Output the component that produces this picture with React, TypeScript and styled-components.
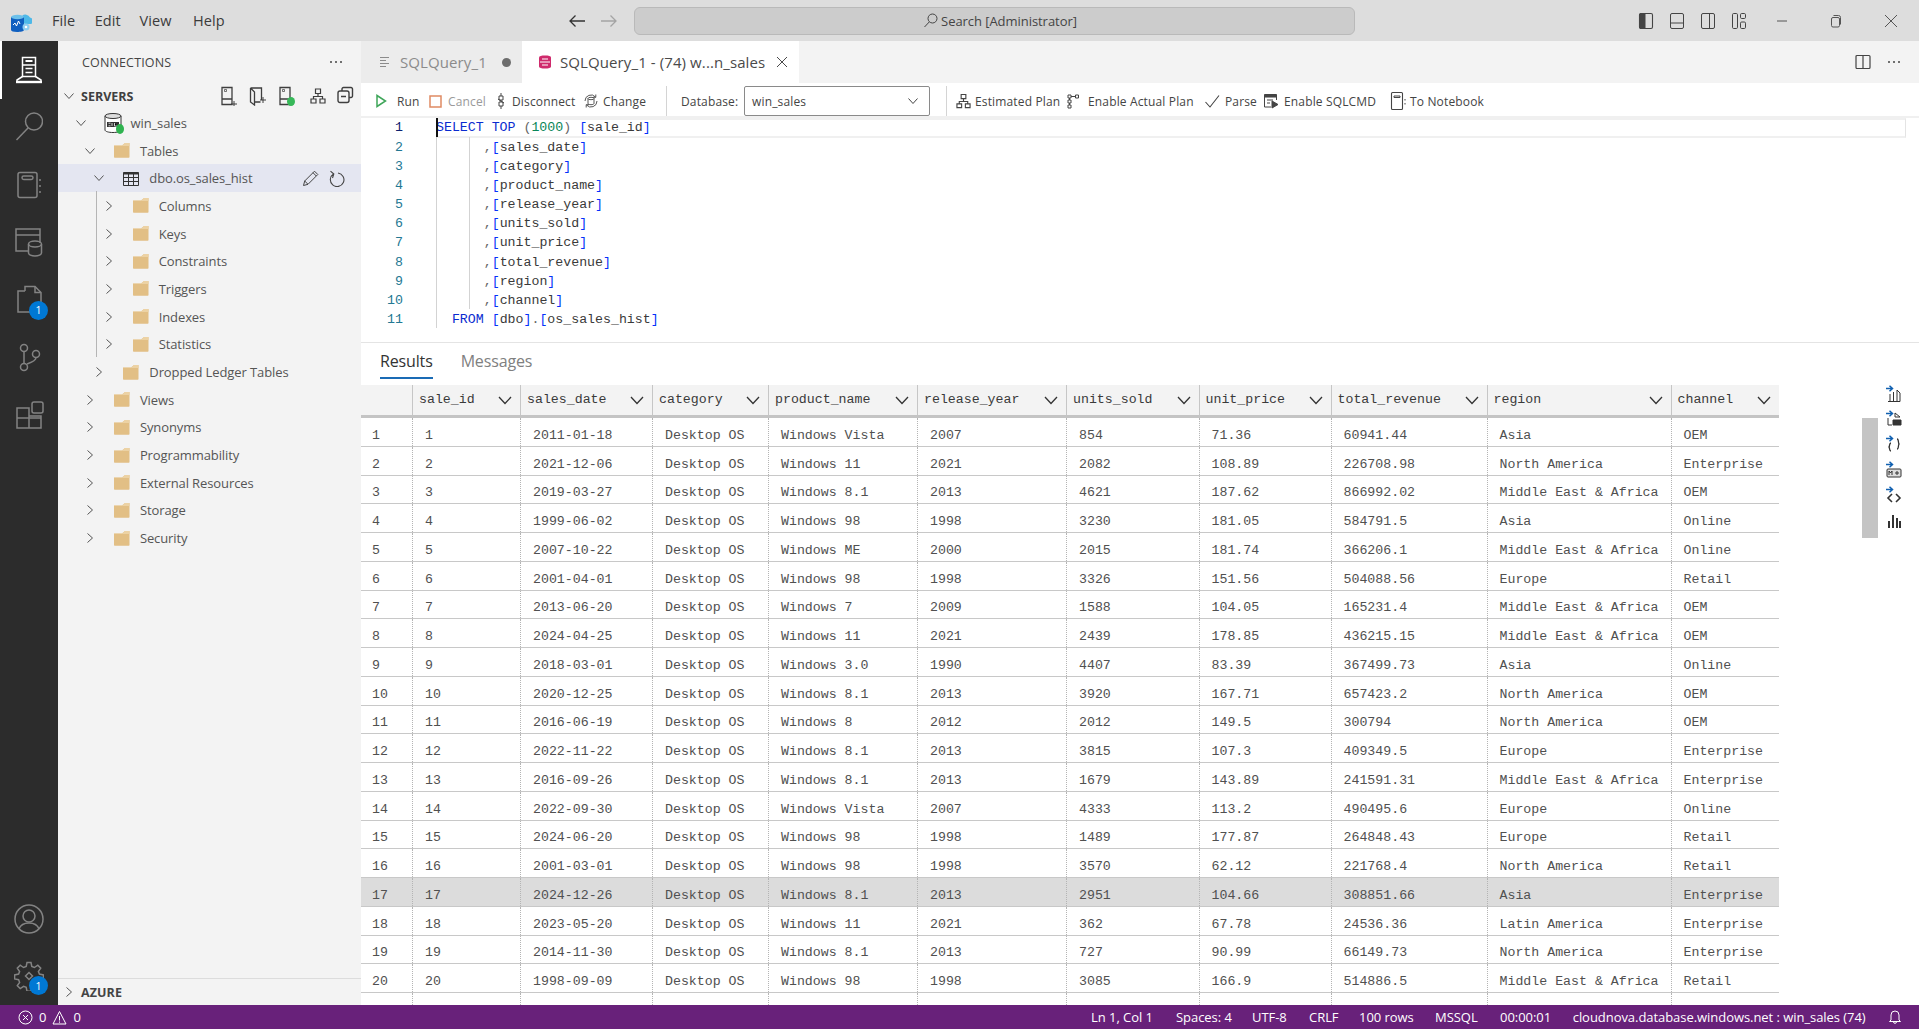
import React from "react";
import styled, { createGlobalStyle } from "styled-components";

const UI = `"Open Sans", "Noto Sans", sans-serif`;
const MONO = `"Liberation Mono", "DejaVu Sans Mono", monospace`;

const Global = createGlobalStyle`
  html, body { margin: 0; padding: 0; width: 100%; height: 100%; overflow: hidden; background: #fff; }
  #root { width: 100%; height: 100%; }
  * { box-sizing: border-box; }
`;

const Shell = styled.div`
  width: 1919px; height: 1029px; display: flex; flex-direction: column; overflow: hidden;
  font-family: ${UI}; color: #444;
`;
/* ---------- title bar ---------- */
const TitleBar = styled.header`
  height: 41px; flex: none; background: #dddddd; display: flex; align-items: center;
`;
const LogoBox = styled.div`
  width: 24px; height: 24px; margin-left: 8px; flex: none;
`;
const Menu = styled.nav`
  display: flex; margin-left: 20px; flex: none;
`;
const MenuItem = styled.span<{ $w: number }>`
  width: ${p => p.$w}px; font-size: 14.5px; letter-spacing: 0.1px; color: #3b3b3b;
`;
const NavArrows = styled.div`
  display: flex; gap: 11.5px; margin-left: 334.5px; flex: none;
`;
const SearchBox = styled.div`
  width: 721px; height: 28px; margin-left: 15px; flex: none; background: #cccccc; border: 1px solid #b9b9b9;
  border-radius: 6px; display: flex; align-items: center; justify-content: center; gap: 3px;
  font-size: 13px; letter-spacing: -0.05px; color: #444; padding-left: 11px; padding-right: 0;
`;
const LayoutIcons = styled.div`
  display: flex; gap: 15px; margin-left: 283.5px; flex: none; color: #444;
`;
const WindowButtons = styled.div`
  display: flex; margin-left: 7px; flex: none;
`;
const WindowButton = styled.div`
  width: 54.6px; height: 41px; display: flex; align-items: center; justify-content: center; color: #555;
`;
/* ---------- body ---------- */
const Body = styled.div`
  flex: 1; display: flex; min-height: 0;
`;
const ActivityBar = styled.aside`
  width: 58px; flex: none; background: #2c2c2c; display: flex; flex-direction: column; align-items: center;
`;
const ActivityItem = styled.div<{ $active?: boolean }>`
  position: relative; width: 58px; height: 57.5px; flex: none; display: flex; align-items: center; justify-content: center;
  color: ${p => (p.$active ? "#ffffff" : "#838383")};
  border-left: 2px solid ${p => (p.$active ? "#ffffff" : "transparent")};
  padding-right: 2px;
`;
const ActivitySpacer = styled.div`
  flex: 1;
`;
const Badge = styled.span<{ $bottom: number }>`
  position: absolute; left: 27px; bottom: ${p => p.$bottom}px; width: 19px; height: 19px; border-radius: 50%;
  background: #0078d4; color: #fff; font-size: 10.5px; display: flex; align-items: center; justify-content: center;
`;
const Sidebar = styled.section`
  width: 303px; flex: none; background: #f3f3f3; display: flex; flex-direction: column;
`;
const SidebarHead = styled.div`
  height: 42px; flex: none; display: flex; align-items: center; justify-content: space-between;
  padding: 0 19px 0 24px; font-size: 12.5px; letter-spacing: 0.15px; color: #444;
`;
const Dots = styled.span`
  display: flex; gap: 2.5px;
  i { width: 2.5px; height: 2.5px; border-radius: 50%; background: currentColor; display: block; }
`;
const ServersHead = styled.div`
  height: 26px; flex: none; display: flex; align-items: center; padding-left: 5px;
  font-size: 12.5px; font-weight: 700; letter-spacing: 0; color: #3f3f3f;
`;
const ServersTitle = styled.span`
  margin-left: 6px; width: 139px;
`;
const ServersTools = styled.div`
  display: flex; gap: 11px; color: #3e3e3e;
`;
const HierSlot = styled.span`
  margin-left: 3px; display: flex; align-items: center;
`;
const Tree = styled.div`
  position: relative; flex: 1;
`;
const TreeGuide = styled.div`
  position: absolute; left: 38px; top: 82px; height: 166px; width: 1px; background: #b5b5b5;
`;
const TreeRow = styled.div<{ $depth: number; $selected?: boolean }>`
  height: 27.7px; display: flex; align-items: center; padding-left: ${p => 16.5 + p.$depth * 9.4}px;
  background: ${p => (p.$selected ? "#e4e6f1" : "transparent")};
  font-size: 13px; letter-spacing: -0.1px; color: #555;
`;
const TreeIcon = styled.span`
  width: 16px; height: 18px; margin-left: 18px; margin-right: 10px; flex: none; display: flex; align-items: center; justify-content: center; color: #333;
`;
const TreeLabel = styled.span`
  flex: 1; white-space: nowrap;
`;
const RowActions = styled.span`
  display: flex; gap: 10px; margin-right: 16px; color: #444;
`;
const ChevronBox = styled.span`
  width: 12px; flex: none; display: flex; align-items: center; justify-content: center; color: #555;
`;
const AzureRow = styled.div`
  height: 27px; flex: none; border-top: 1px solid #dcdcdc; display: flex; align-items: center; padding-left: 5px;
  font-size: 12.5px; font-weight: 700; letter-spacing: 0.1px; color: #444;
`;
const AzureTitle = styled.span`
  margin-left: 6px;
`;
/* ---------- editor column ---------- */
const Main = styled.main`
  flex: 1; display: flex; flex-direction: column; min-width: 0; background: #fff;
`;
const TabBar = styled.div`
  height: 42px; flex: none; background: #f3f3f3; display: flex;
`;
const Tab = styled.div<{ $active?: boolean; $w: number }>`
  width: ${p => p.$w}px; flex: none; display: flex; align-items: center; background: ${p => (p.$active ? "#ffffff" : "#ececec")};
  color: ${p => (p.$active ? "#4a4a4a" : "#8b8b8b")}; font-size: 15px; letter-spacing: 0.1px;
  padding-left: ${p => (p.$active ? 16 : 17)}px; position: relative; white-space: nowrap;
`;
const TabIcon = styled.span`
  width: 14px; margin-right: 8px; display: flex; align-items: center; justify-content: center; flex: none;
`;
const TabEnd = styled.span`
  margin-left: auto; margin-right: 11px; display: flex; align-items: center;
`;
const DirtyDot = styled.span`
  width: 9px; height: 9px; border-radius: 50%; background: #6d6d6d; display: block;
`;
const TabFill = styled.div`
  flex: 1; display: flex; align-items: center; justify-content: flex-end; gap: 17px; padding-right: 19px; color: #444;
`;
const Toolbar = styled.div`
  height: 35px; flex: none; display: flex; align-items: center; padding: 3px 0 0 12px; background: #fff;
  font-size: 12px; letter-spacing: 0.15px; color: #444; border-bottom: 2px solid #f0f0f0;
`;
const ToolButton = styled.div<{ $w: number; $gap: number; $muted?: boolean }>`
  width: ${p => p.$w}px; flex: none; display: flex; align-items: center; gap: ${p => p.$gap}px; white-space: nowrap;
  color: ${p => (p.$muted ? "#9a9a9a" : "inherit")};
`;
const ToolIcon = styled.span`
  width: 16px; height: 18px; flex: none; display: flex; align-items: center; justify-content: center;
`;
const ToolSep = styled.div<{ $ml: number; $mr: number }>`
  width: 1px; height: 30px; background: #d4d4d4; margin-left: ${p => p.$ml}px; margin-right: ${p => p.$mr}px; flex: none;
`;
const DbLabel = styled.span`
  width: 63px; flex: none;
`;
const DbSelect = styled.div`
  width: 186px; height: 30px; flex: none; border: 1px solid #8a8a8a; border-radius: 2px; display: flex; align-items: center;
  justify-content: space-between; padding: 0 10px 0 7px;
`;
const EditorPane = styled.div`
  height: 225px; flex: none; display: flex; border-bottom: 1px solid #e4e4e4; position: relative;
`;
const Gutter = styled.div`
  width: 75px; flex: none; padding-right: 33px; text-align: right; font-family: ${MONO}; font-size: 13.25px; color: #237893;
`;
const LineNo = styled.div<{ $active?: boolean }>`
  height: ${p => (p.$active ? "20px" : "19.1px")}; line-height: 19.1px; color: ${p => (p.$active ? "#0b216f" : "#237893")};
`;
const CodeArea = styled.div`
  position: relative; flex: 1; font-family: ${MONO}; font-size: 13.25px; white-space: pre; color: #3a3a3a;
`;
const CodeLine = styled.div<{ $current?: boolean }>`
  height: ${p => (p.$current ? "20px" : "19.1px")}; line-height: ${p => (p.$current ? "15.6px" : "19.1px")};
  ${p => p.$current && "border-top: 2px solid #f0f0f0; border-bottom: 2px solid #f0f0f0; border-right: 1px solid #e4e4e4; margin-right: 13px;"}
`;
const Guide = styled.div<{ $left: number; $top: number; $h: number }>`
  position: absolute; left: ${p => p.$left}px; top: ${p => p.$top}px; height: ${p => p.$h}px; width: 1px; background: #d3d3d3;
`;
const Caret = styled.div`
  position: absolute; left: 0; top: 0; width: 2px; height: 19px; background: #111;
`;
const Kw = styled.span`color: #0a2bd0;`;
const Num = styled.span`color: #098658;`;
const Br = styled.span`color: #0431fa;`;
const Punct = styled.span`color: #666;`;
const ResultsPane = styled.div`
  flex: 1; display: flex; min-height: 0; overflow: hidden;
`;
const ResultsMain = styled.div`
  width: 1418px; flex: none; display: flex; flex-direction: column; min-height: 0;
`;
const ResultTabs = styled.div`
  height: 42px; flex: none; display: flex; gap: 28px; padding-left: 19px; font-size: 16px;
`;
const ResultTab = styled.div<{ $active?: boolean }>`
  height: 36px; display: flex; align-items: center; padding-top: 2px; letter-spacing: -0.15px;
  color: ${p => (p.$active ? "#333" : "#808080")};
  border-bottom: 2px solid ${p => (p.$active ? "#1a6bb5" : "transparent")};
`;
const COLS = "52px 108px 132px 116px 149px 149px 132.5px 132px 156px 184px 108.5px";
const Grid = styled.div`
  flex: 1; display: flex; flex-direction: column; min-height: 0; overflow: hidden;
  font-family: ${MONO}; font-size: 13.25px;
`;
const HeadRow = styled.div`
  height: 33px; flex: none; display: grid; grid-template-columns: ${COLS}; background: #f3f3f3; border-bottom: 3px solid #c4c4c4; color: #333;
`;
const HeadCell = styled.div`
  border-right: 1px solid #c6c6c6; padding: 0 8px 2px 6px; display: flex; align-items: center; justify-content: space-between; color: #3a3a3a;
`;
const HeadChev = styled.span`
  color: #333; display: flex; margin-top: 2px;
`;
const DataRow = styled.div<{ $selected?: boolean }>`
  height: 28.75px; flex: none; display: grid; grid-template-columns: ${COLS};
  background: ${p => (p.$selected ? "#dcdcdc" : "#fff")}; border-bottom: 1px solid #c8c8c8; color: #505050;
`;
const FillRow = styled.div`
  flex: 1; display: grid; grid-template-columns: ${COLS};
`;
const DataCell = styled.div<{ $index?: boolean }>`
  border-right: 1px dotted #b4b4b4; padding-left: ${p => (p.$index ? 11 : 12)}px; padding-top: 7px; display: flex; align-items: center; white-space: nowrap; overflow: hidden;
`;
const RightRail = styled.div`
  flex: 1; display: flex; padding-left: 83px;
`;
const ScrollThumb = styled.div`
  width: 16px; height: 120px; margin-top: 75px; background: #c4c4c4; flex: none;
`;
const RailIcons = styled.div`
  margin-left: 8px; margin-top: 38px; display: flex; flex-direction: column; flex: none;
`;
const RailIcon = styled.div`
  width: 16px; height: 25.4px; display: flex; align-items: center; justify-content: center;
`;
/* ---------- status ---------- */
const StatusBar = styled.footer`
  height: 24px; flex: none; background: #68217a; color: #fff; display: flex; align-items: center; font-size: 13px; letter-spacing: -0.05px;
  padding-left: 18px; padding-right: 16px;
`;
const StatusLeft = styled.div`
  display: flex; align-items: center; gap: 6px; margin-right: auto;
`;
const StatusItem = styled.span<{ $w: number }>`
  width: ${p => p.$w}px; flex: none; white-space: nowrap;
`;
const BellSlot = styled.span`
  width: 16px; flex: none; display: flex; justify-content: center;
`;

/* ---------- icons ---------- */
const S = ({ w = 16, h = w, vb, sw = 1, children }: { w?: number; h?: number; vb?: string; sw?: number; children: React.ReactNode }) => (
  <svg width={w} height={h} viewBox={vb || `0 0 ${w} ${h}`} fill="none" stroke="currentColor" strokeWidth={sw} style={{ display: "block", flex: "none" }}>
    {children}
  </svg>
);
const Chev = ({ dir }: { dir: "down" | "right" }) => (
  <S w={12} h={12}>{dir === "down" ? <path d="M1.5 3.5 6 8.5l4.5-5" /> : <path d="M3.5 1.5 8.5 6l-5 4.5" />}</S>
);
const ChevBold = () => (
  <S w={14} h={14} sw={1.3}><path d="M1 4l6 6.500L13 4" /></S>
);
const Folder = () => (
  <svg width="16" height="15" viewBox="0 0 16 15" style={{ display: "block" }}>
    <path d="M0 2.5h8L11 0h4.5v14a.7.7 0 0 1-.7.7H.7A.7.7 0 0 1 0 14z" fill="#e2bf85" />
    <path d="M0 2.5h8L11 0h4.5v3H0z" fill="#ecd2a4" />
  </svg>
);
const TableIcon = () => (
  <S w={16} h={15}>
    <path d="M.5 1.5h15v13H.5z" />
    <path d="M.5 2.5h15" strokeWidth="2" />
    <path d="M.5 6.5h15M.5 10.5h15M5.5 3v11M10.5 3v11" />
  </S>
);
const GreenDot = styled.span`
  position: absolute; right: -2px; bottom: -1px; width: 8px; height: 10px; border-radius: 50%; background: #2fb350;
`;
const IconStack = styled.div`
  position: relative; width: 18px; height: 20px; flex: none;
`;
const DbIcon = () => (
  <IconStack>
    <svg width="18" height="20" viewBox="0 0 18 20" style={{ display: "block" }}>
      <path d="M1 3v14c0 1.4 3.6 2.5 8 2.5s8-1.100 8-2.500V3" fill="#fff" stroke="#333" />
      <ellipse cx="9" cy="3" rx="8" ry="2.500" fill="#ddd" stroke="#333" />
      <path d="M3 9h12v5H3z" fill="#333" />
      <path d="M4.500 10.200h2M4.500 12.800h2M8 10v3M10.500 10v3h3" stroke="#fff" strokeWidth=".8" />
    </svg>
    <GreenDot />
  </IconStack>
);
const Logo = () => (
  <svg width="24" height="24" viewBox="0 0 24 24" style={{ display: "block" }}>
    <path d="M13 12a4.500 4.500 0 0 1 1-5 5 5 0 0 1 8 1.500 3.500 3.500 0 0 1 1 6.500h-6z" fill="#4db8e8" />
    <path d="M3 8v13c0 1.200 2.500 2 6 2s7-.8 7-2V8z" fill="#0f5fc0" />
    <ellipse cx="9.500" cy="8" rx="6.500" ry="2.200" fill="#6cc0ea" />
    <path d="M5 16l2-2 1.500 3 2-5 1.500 3" stroke="#fff" strokeWidth="1" fill="none" />
    <circle cx="18" cy="18" r="3.500" fill="#8ecdf0" />
    <circle cx="18" cy="18" r="1.300" fill="#fff" />
  </svg>
);
const ServerTall = () => (
  <S w={28} h={30} sw={1.500}>
    <path d="M7.500 2.500h13v19h-13zM7.500 10h13" />
    <path d="M10.500 13.500h7M10.500 17.500h7" />
    <path d="M10.500 6h7" strokeWidth="2" />
    <path d="M7.500 21.500 2 25v2M20.500 21.500 26 25v2" />
    <path d="M1 27h26" strokeWidth="2.400" />
  </S>
);
const SearchIco = () => (
  <S w={28} h={30} sw={1.500}><circle cx="19" cy="9.500" r="8.500" /><path d="M13 16 1.500 28" /></S>
);
const NotebookIco = () => (
  <S w={28} h={30} sw={1.500}>
    <rect x="3" y="2.500" width="19" height="25" rx="2" />
    <rect x="7" y="6" width="11" height="3.500" rx="1.700" />
    <path d="M25 9v2M25 15v2M25 21v2" />
  </S>
);
const DashIco = () => (
  <S w={30} h={30} sw={1.500}>
    <path d="M15 24H2V2h24v14M2 8h24" />
    <ellipse cx="21" cy="17" rx="6.500" ry="3" />
    <path d="M14.500 17v9c0 1.600 3 3 6.500 3s6.500-1.400 6.500-3v-9" />
  </S>
);
const FilesIco = () => (
  <S w={28} h={30} sw={1.500}>
    <path d="M10 6V1.500h10l6 6V20h-5" />
    <path d="M20 1.500v6h6" />
    <path d="M10 6H3v21h16v-3" />
  </S>
);
const GitIco = () => (
  <S w={26} h={30} sw={1.500}>
    <circle cx="8" cy="6" r="3.500" /><circle cx="8" cy="25" r="3.500" /><circle cx="20" cy="12" r="3.500" />
    <path d="M8 9.500v12M20 15.500c0 3-3 4.500-9 6.500" />
  </S>
);
const ExtIco = () => (
  <S w={30} h={30} sw={1.500}>
    <rect x="18" y="2" width="11" height="11" rx="2" />
    <path d="M15 8H3v20h24V16H15zM15 8v20M3 18h24" />
  </S>
);
const AccountIco = () => (
  <S w={30} h={30} sw={1.500}>
    <circle cx="15" cy="15" r="14" /><circle cx="15" cy="12" r="6" />
    <path d="M5 25c1.500-4 5-6 10-6s8.500 2 10 6" />
  </S>
);
const GearIco = () => (
  <S w={30} h={30} sw={1.500}>
    <path d="M13 1.500h4l.8 4 2.600 1 3.400-2.300 2.900 2.900-2.300 3.400 1 2.600 4 .8v4l-4 .8-1 2.600 2.300 3.400-2.900 2.900-3.400-2.300-2.600 1-.8 4h-4l-.8-4-2.600-1-3.400 2.300-2.900-2.900 2.300-3.400-1-2.600-4-.8v-4l4-.8 1-2.600L3.300 7.100l2.900-2.900 3.400 2.300 2.600-1z" />
    <path d="M15 11.500 18.500 15 15 18.500 11.500 15z" />
  </S>
);
const NewConn = () => (
  <S w={18} h={20}><path d="M2 1.500h10v17H2zM2 13h10" strokeWidth="1.300" /><path d="M4.500 3.500v2h2v-2z" strokeWidth=".7" /><path d="M11 18h6M14 15v6" /></S>
);
const NewFolderConn = () => (
  <S w={18} h={20}><path d="M1.500 2h11v12M1.500 2v14l4 3V6l-4-4M5.500 16h6" strokeWidth="1.300" /><path d="M11 14h6M14 11v6" /></S>
);
const SmallGreen = styled.span`
  position: absolute; right: 1px; bottom: 0; width: 8px; height: 9px; border-radius: 50%; background: #37b859;
`;
const ServerDot = () => (
  <IconStack>
    <S w={18} h={20}><path d="M2 1.500h10v17H2zM2 13h10" strokeWidth="1.300" /><path d="M4.500 3.500v2h2v-2z" strokeWidth=".7" /></S>
    <SmallGreen />
  </IconStack>
);
const Hier = ({ w = 16 }: { w?: number }) => (
  <S w={w} h={16} vb="0 0 16 16" sw={1.200}>
    <path d="M5.500 1h5v4.500h-5zM1 11h5v4H1zM10 11h5v4h-5zM8 5.500V8.500M3.500 11V8.500h9V11" />
  </S>
);
const Collapse = () => (
  <S w={17} h={18} sw={1.400}>
    <rect x="1" y="5" width="11" height="11.500" rx="2" />
    <path d="M5 5V3a1.500 1.500 0 0 1 1.500-1.500H14A1.500 1.500 0 0 1 15.500 3v7a1.500 1.500 0 0 1-1.500 1.500h-2M4 10.500h5" />
  </S>
);
const Pencil = () => (
  <S w={17} h={17}><path d="m1.500 15.500 1.200-4.500L12.500 1.200l3.300 3.300L6 14.300zM2.700 11 6 14.300M11 2.700l3.300 3.300" /></S>
);
const Refresh = () => (
  <S w={16} h={17} sw={1.100}><path d="M4.500 4A6.800 6.800 0 1 0 9 3M1.500 1.200 4.800 4 3.500 8" /></S>
);
const DocIco = () => (
  <S w={14} h={14}><path d="M2 2.500h9M2 5.500h6M2 8.500h9M2 11.500h6" /></S>
);
const QueryIco = () => (
  <svg width="14" height="14" viewBox="0 0 14 14" style={{ display: "block" }}>
    <path d="M1 2.500C1 1 3.500.5 7 .5s6 .5 6 2v9c0 1.500-2.500 2-6 2s-6-.5-6-2z" fill="#cf2a6c" />
    <path d="M4 4h6M2 7h10M4 10h6" stroke="#fff" strokeWidth="1" />
  </svg>
);
const XIco = ({ s = 12 }: { s?: number }) => (
  <S w={s} h={s}><path d={`M1 1l${s - 2} ${s - 2}M${s - 1} 1 1 ${s - 1}`} /></S>
);
const SplitIco = () => (
  <S w={16} h={16}><rect x="1" y="1.500" width="14" height="13" rx="1" strokeWidth="1.200" /><path d="M8 1.500v13" strokeWidth="1.200" /></S>
);
const PlayIco = () => (
  <S w={12} h={14} sw={1.500}><path d="M2 1.500 10.500 7 2 12.500z" stroke="#3fa65a" /></S>
);
const CancelIco = () => (
  <S w={13} h={13} sw={1.500}><path d="M1 1h11v11H1z" stroke="#e08a63" /></S>
);
const DisconnectIco = () => (
  <S w={12} h={18}><path d="M6 1v3M4 4h4v4H4zM6 8v2M4 10h4v4H4zM6 14v3M3 7l6 4" /></S>
);
const ChangeIco = () => (
  <S w={16} h={16} sw={.9}><path d="M2 8a6 6 0 0 1 10.500-4M14 8a6 6 0 0 1-10.500 4M12.800 1.500V4.300H10M3.200 14.500v-2.800H6" /><ellipse cx="8" cy="5.500" rx="3" ry="1.200" /><path d="M5 5.500v5c0 .7 1.300 1.200 3 1.200s3-.5 3-1.200v-5" /></S>
);
const ActualPlanIco = () => (
  <S w={16} h={16}><path d="M3 2h3v3H3zM3 7h3v3H3zM3 12h3v3H3zM10.500 2h3v3h-3zM6 3.500h4.500M4.500 5v2M4.500 10v2" /></S>
);
const CheckIco = () => (
  <S w={16} h={16} sw={1.100}><path d="M1.500 9 6 14 15 2.500" /></S>
);
const SqlCmdIco = () => (
  <S w={16} h={16}><path d="M8 14H1.500V1.500h12V7M1.500 4h12" /><path d="M1.500 2.800h12" strokeWidth="2.500" /><path d="M4 7h6M4 10h3" /><path d="M9 8l6 3.500-6 3.500z" fill="currentColor" /></S>
);
const NotebookSmall = () => (
  <S w={18} h={20}><rect x="3.500" y="1.500" width="11" height="17" rx="1" strokeWidth="1.100" /><path d="M6 5h6v1.500H6z" /><path d="M17 8v1.500M17 12v1.500" /></S>
);
const Arrow = ({ back, muted }: { back?: boolean; muted?: boolean }) => (
  <svg width="20" height="16" viewBox="0 0 20 16" fill="none" stroke={muted ? "#a4a4a4" : "#333"} strokeWidth="1.300" style={{ display: "block" }}>
    {back ? <path d="M18 8H3M8.500 2.500 3 8l5.500 5.500" /> : <path d="M2 8h15M11.500 2.500 17 8l-5.500 5.500" />}
  </svg>
);
const MiniSearch = () => (
  <S w={15} h={15}><circle cx="9.500" cy="5.500" r="4.500" /><path d="M6.200 9 1.500 14" /></S>
);
const Panel1 = () => (
  <S w={16} h={18}><rect x="1.500" y="1.500" width="13" height="15" rx="1.500" strokeWidth="1.100" /><path d="M1.500 3a1.500 1.500 0 0 1 1.500-1.500h4v15H3A1.500 1.500 0 0 1 1.500 15z" fill="currentColor" /></S>
);
const Panel2 = () => (
  <S w={16} h={18}><rect x="1.500" y="1.500" width="13" height="15" rx="1.500" /><path d="M1.500 11h13" /></S>
);
const Panel3 = () => (
  <S w={16} h={18}><rect x="1.500" y="1.500" width="13" height="15" rx="1.500" /><path d="M9.500 1.500v15" /></S>
);
const Panel4 = () => (
  <S w={16} h={18}><rect x="1.500" y="1.500" width="5" height="15" rx="1.200" /><rect x="9.500" y="1.500" width="5" height="5" rx="1.200" /><rect x="9.500" y="10" width="5" height="6.500" rx="1.200" /></S>
);
const MinIco = () => <S w={12} h={12}><path d="M1 6h10" /></S>;
const RestoreIco = () => (
  <S w={12} h={14}><rect x="1.500" y="3.500" width="8" height="9.500" rx="1.500" /><path d="M3.500 1.500h5a2 2 0 0 1 2 2v7" /></S>
);
const ErrorIco = () => (
  <S w={15} h={15}><circle cx="7.500" cy="7.500" r="6.500" /><path d="m5 5 5 5M10 5l-5 5" /></S>
);
const WarnIco = () => (
  <S w={15} h={15}><path d="M7.500 1.500 14 14H1zM7.500 6v4.500M7.500 11.500v1.200" /></S>
);
const BellIco = () => (
  <S w={14} h={16}><path d="M3 11V6a4 4 0 0 1 8 0v5l1.500 1.500h-11zM5.500 12.800a1.500 1.500 0 0 0 3 0" /></S>
);
const ArrowTop = () => (
  <path d="M0 3.500h6M3.500 .8 6.500 3.500 3.500 6.200" stroke="#1060b0" strokeWidth="1.500" fill="none" />
);
const Rail = ({ children }: { children: React.ReactNode }) => (
  <svg width="16" height="18" viewBox="0 0 16 18" fill="none" stroke="#333" style={{ display: "block" }}>{children}</svg>
);
const railIcons = [
  <Rail key="a"><ArrowTop /><path d="M2 16.500h12M4 9v7.500M7.500 7v9.500M11 5l3 3v8.500h-3z" /></Rail>,
  <Rail key="b"><ArrowTop /><path d="M9 3l5 4H9zM2 8v7h4" /><path d="M7 10h8v5H7z" fill="#333" /></Rail>,
  <Rail key="c"><ArrowTop /><path d="M5 8c-2 0-1 3-2 4 1 1 0 4 2 4M11 4c2 0 1 4 2 5-1 1 0 5-2 5" strokeWidth="1.300" /></Rail>,
  <Rail key="d"><ArrowTop /><rect x="1" y="8" width="14" height="8" rx="1" fill="#ddd" /><path d="M3 14v-4l1.500 2 1.500-2v4M9 12h4M11 10v4" /></Rail>,
  <Rail key="e"><ArrowTop /><path d="M6 8l-4 4 4 4M10 8l4 4-4 4" strokeWidth="1.600" /></Rail>,
  <Rail key="f"><path d="M3 16V9M7 16V3M11 16V6M14 16V9" strokeWidth="2" /></Rail>,
];

/* ---------- data ---------- */
const tree: { label: string; depth: number; dir: "down" | "right"; kind: "db" | "folder" | "table"; sel?: boolean }[] = [
  { label: "win_sales", depth: 0, dir: "down", kind: "db" },
  { label: "Tables", depth: 1, dir: "down", kind: "folder" },
  { label: "dbo.os_sales_hist", depth: 2, dir: "down", kind: "table", sel: true },
  { label: "Columns", depth: 3, dir: "right", kind: "folder" },
  { label: "Keys", depth: 3, dir: "right", kind: "folder" },
  { label: "Constraints", depth: 3, dir: "right", kind: "folder" },
  { label: "Triggers", depth: 3, dir: "right", kind: "folder" },
  { label: "Indexes", depth: 3, dir: "right", kind: "folder" },
  { label: "Statistics", depth: 3, dir: "right", kind: "folder" },
  { label: "Dropped Ledger Tables", depth: 2, dir: "right", kind: "folder" },
  { label: "Views", depth: 1, dir: "right", kind: "folder" },
  { label: "Synonyms", depth: 1, dir: "right", kind: "folder" },
  { label: "Programmability", depth: 1, dir: "right", kind: "folder" },
  { label: "External Resources", depth: 1, dir: "right", kind: "folder" },
  { label: "Storage", depth: 1, dir: "right", kind: "folder" },
  { label: "Security", depth: 1, dir: "right", kind: "folder" },
];
const fields = ["sales_date", "category", "product_name", "release_year", "units_sold", "unit_price", "total_revenue", "region", "channel"];
const ME = "Middle East & Africa";
const NA = "North America";
const rows: string[][] = [
  ["2011-01-18", "Windows Vista", "2007", "854", "71.36", "60941.44", "Asia", "OEM"],
  ["2021-12-06", "Windows 11", "2021", "2082", "108.89", "226708.98", NA, "Enterprise"],
  ["2019-03-27", "Windows 8.1", "2013", "4621", "187.62", "866992.02", ME, "OEM"],
  ["1999-06-02", "Windows 98", "1998", "3230", "181.05", "584791.5", "Asia", "Online"],
  ["2007-10-22", "Windows ME", "2000", "2015", "181.74", "366206.1", ME, "Online"],
  ["2001-04-01", "Windows 98", "1998", "3326", "151.56", "504088.56", "Europe", "Retail"],
  ["2013-06-20", "Windows 7", "2009", "1588", "104.05", "165231.4", ME, "OEM"],
  ["2024-04-25", "Windows 11", "2021", "2439", "178.85", "436215.15", ME, "OEM"],
  ["2018-03-01", "Windows 3.0", "1990", "4407", "83.39", "367499.73", "Asia", "Online"],
  ["2020-12-25", "Windows 8.1", "2013", "3920", "167.71", "657423.2", NA, "OEM"],
  ["2016-06-19", "Windows 8", "2012", "2012", "149.5", "300794", NA, "OEM"],
  ["2022-11-22", "Windows 8.1", "2013", "3815", "107.3", "409349.5", "Europe", "Enterprise"],
  ["2016-09-26", "Windows 8.1", "2013", "1679", "143.89", "241591.31", ME, "Enterprise"],
  ["2022-09-30", "Windows Vista", "2007", "4333", "113.2", "490495.6", "Europe", "Online"],
  ["2024-06-20", "Windows 98", "1998", "1489", "177.87", "264848.43", "Europe", "Retail"],
  ["2001-03-01", "Windows 98", "1998", "3570", "62.12", "221768.4", NA, "Retail"],
  ["2024-12-26", "Windows 8.1", "2013", "2951", "104.66", "308851.66", "Asia", "Enterprise"],
  ["2023-05-20", "Windows 11", "2021", "362", "67.78", "24536.36", "Latin America", "Enterprise"],
  ["2014-11-30", "Windows 8.1", "2013", "727", "90.99", "66149.73", NA, "Enterprise"],
  ["1998-09-09", "Windows 98", "1998", "3085", "166.9", "514886.5", ME, "Retail"],
];
const columnNames = ["sale_id", ...fields];
const statusItems: [string, number][] = [
  ["Ln 1, Col 1", 85], ["Spaces: 4", 76], ["UTF-8", 57], ["CRLF", 50], ["100 rows", 76], ["MSSQL", 65], ["00:00:01", 72.7],
  ["cloudnova.database.windows.net : win_sales (74)", 314.3],
];
const B = ({ t }: { t: string }) => (<><Br>[</Br>{t}<Br>]</Br></>);

export default function App() {
  return (
    <Shell>
      <Global />
      <TitleBar>
        <LogoBox><Logo /></LogoBox>
        <Menu>
          <MenuItem $w={42.7}>File</MenuItem>
          <MenuItem $w={44.9}>Edit</MenuItem>
          <MenuItem $w={53.4}>View</MenuItem>
          <MenuItem $w={40}>Help</MenuItem>
        </Menu>
        <NavArrows><Arrow back /><Arrow muted /></NavArrows>
        <SearchBox><MiniSearch />Search [Administrator]</SearchBox>
        <LayoutIcons><Panel1 /><Panel2 /><Panel3 /><Panel4 /></LayoutIcons>
        <WindowButtons>
          <WindowButton><MinIco /></WindowButton>
          <WindowButton><RestoreIco /></WindowButton>
          <WindowButton><XIco s={14} /></WindowButton>
        </WindowButtons>
      </TitleBar>
      <Body>
        <ActivityBar>
          <ActivityItem $active><ServerTall /></ActivityItem>
          <ActivityItem><SearchIco /></ActivityItem>
          <ActivityItem><NotebookIco /></ActivityItem>
          <ActivityItem><DashIco /></ActivityItem>
          <ActivityItem><FilesIco /><Badge $bottom={9}>1</Badge></ActivityItem>
          <ActivityItem><GitIco /></ActivityItem>
          <ActivityItem><ExtIco /></ActivityItem>
          <ActivitySpacer />
          <ActivityItem><AccountIco /></ActivityItem>
          <ActivityItem><GearIco /><Badge $bottom={10}>1</Badge></ActivityItem>
        </ActivityBar>
        <Sidebar>
          <SidebarHead>CONNECTIONS<Dots><i /><i /><i /></Dots></SidebarHead>
          <ServersHead>
            <ChevronBox><Chev dir="down" /></ChevronBox>
            <ServersTitle>SERVERS</ServersTitle>
            <ServersTools><NewConn /><NewFolderConn /><ServerDot /><HierSlot><Hier /></HierSlot><Collapse /></ServersTools>
          </ServersHead>
          <Tree>
            <TreeGuide />
            {tree.map(r => (
              <TreeRow key={r.label} $depth={r.depth} $selected={r.sel}>
                <ChevronBox><Chev dir={r.dir} /></ChevronBox>
                <TreeIcon>{r.kind === "folder" ? <Folder /> : r.kind === "table" ? <TableIcon /> : <DbIcon />}</TreeIcon>
                <TreeLabel>{r.label}</TreeLabel>
                {r.sel && <RowActions><Pencil /><Refresh /></RowActions>}
              </TreeRow>
            ))}
          </Tree>
          <AzureRow><ChevronBox><Chev dir="right" /></ChevronBox><AzureTitle>AZURE</AzureTitle></AzureRow>
        </Sidebar>
        <Main>
          <TabBar>
            <Tab $w={161}><TabIcon><DocIco /></TabIcon>SQLQuery_1<TabEnd><DirtyDot /></TabEnd></Tab>
            <Tab $active $w={277}><TabIcon><QueryIco /></TabIcon>SQLQuery_1 - (74) w...n_sales<TabEnd><XIco /></TabEnd></Tab>
            <TabFill><SplitIco /><Dots><i /><i /><i /></Dots></TabFill>
          </TabBar>
          <Toolbar>
            <ToolButton $w={54} $gap={8}><ToolIcon><PlayIco /></ToolIcon>Run</ToolButton>
            <ToolButton $w={66} $gap={5} $muted><ToolIcon><CancelIco /></ToolIcon>Cancel</ToolButton>
            <ToolButton $w={90} $gap={3}><ToolIcon><DisconnectIco /></ToolIcon>Disconnect</ToolButton>
            <ToolButton $w={76} $gap={4}><ToolIcon><ChangeIco /></ToolIcon>Change</ToolButton>
            <ToolSep $ml={7} $mr={14} />
            <DbLabel>Database:</DbLabel>
            <DbSelect>win_sales<Chev dir="down" /></DbSelect>
            <ToolSep $ml={16} $mr={8} />
            <ToolButton $w={110} $gap={4}><ToolIcon><Hier w={15} /></ToolIcon>Estimated Plan</ToolButton>
            <ToolButton $w={139} $gap={7}><ToolIcon><ActualPlanIco /></ToolIcon>Enable Actual Plan</ToolButton>
            <ToolButton $w={59} $gap={5}><ToolIcon><CheckIco /></ToolIcon>Parse</ToolButton>
            <ToolButton $w={126} $gap={5}><ToolIcon><SqlCmdIco /></ToolIcon>Enable SQLCMD</ToolButton>
            <ToolButton $w={110} $gap={5}><ToolIcon><NotebookSmall /></ToolIcon>To Notebook</ToolButton>
          </Toolbar>
          <EditorPane>
            <Gutter>
              {Array.from({ length: 11 }, (_, i) => <LineNo key={i} $active={i === 0}>{i + 1}</LineNo>)}
            </Gutter>
            <CodeArea>
              <Guide $left={0} $top={0} $h={210} />
              <Guide $left={33} $top={19} $h={172} />
              <Caret />
              <CodeLine $current><Kw>SELECT TOP</Kw> <Punct>(</Punct><Num>1000</Num><Punct>)</Punct> <B t="sale_id" /></CodeLine>
              {fields.map(f => (
                <CodeLine key={f}>{"      "}<Punct>,</Punct><B t={f} /></CodeLine>
              ))}
              <CodeLine>{"  "}<Kw>FROM</Kw> <B t="dbo" /><Punct>.</Punct><B t="os_sales_hist" /></CodeLine>
            </CodeArea>
          </EditorPane>
          <ResultsPane>
            <ResultsMain>
              <ResultTabs>
                <ResultTab $active>Results</ResultTab>
                <ResultTab>Messages</ResultTab>
              </ResultTabs>
              <Grid>
                <HeadRow>
                  <HeadCell />
                  {columnNames.map(h => <HeadCell key={h}>{h}<HeadChev><ChevBold /></HeadChev></HeadCell>)}
                </HeadRow>
                {rows.map((r, i) => (
                  <DataRow key={i} $selected={i === 16}>
                    <DataCell $index>{i + 1}</DataCell>
                    <DataCell>{i + 1}</DataCell>
                    <DataCell>{r[0]}</DataCell>
                    <DataCell>Desktop OS</DataCell>
                    {r.slice(1).map((c, j) => <DataCell key={j}>{c}</DataCell>)}
                  </DataRow>
                ))}
                <FillRow>
                  {Array.from({ length: 11 }, (_, i) => <DataCell key={i} />)}
                </FillRow>
              </Grid>
            </ResultsMain>
            <RightRail>
              <ScrollThumb />
              <RailIcons>
                {railIcons.map((ic, i) => <RailIcon key={i}>{ic}</RailIcon>)}
              </RailIcons>
            </RightRail>
          </ResultsPane>
        </Main>
      </Body>
      <StatusBar>
        <StatusLeft><ErrorIco />0<WarnIco />0</StatusLeft>
        {statusItems.map(([t, w]) => <StatusItem key={t} $w={w}>{t}</StatusItem>)}
        <BellSlot><BellIco /></BellSlot>
      </StatusBar>
    </Shell>
  );
}
